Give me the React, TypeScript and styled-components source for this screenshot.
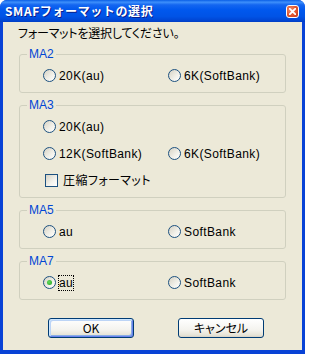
import React from 'react';
import styled, {createGlobalStyle} from 'styled-components';

const GlobalStyle = createGlobalStyle`
  html, body {
    margin: 0;
    padding: 0;
    background: #ffffff;
  }
  body {
    font-family: "Liberation Sans", "Noto Sans CJK JP", sans-serif;
    font-size: 12px;
    color: #000000;
  }
`;

const colors = {
  face: '#ECE9D8',
  frame: '#0842D6',
  groupLine: '#D0D0BF',
  groupText: '#0046D5',
  control: '#1C5180'
};

const Window = styled.div`
  width: 305px;
  height: 354px;
  display: flex;
  flex-direction: column;
  box-sizing: border-box;
  border-radius: 7px 7px 0 0;
  overflow: hidden;
  background: ${colors.frame};
`;

const TitleBar = styled.div`
  height: 22px;
  flex: none;
  display: flex;
  align-items: center;
  justify-content: space-between;
  padding: 0 6px 0 5px;
  background: linear-gradient(
    to bottom,
    #0a5fe6 0%,
    #3d8ffb 10%,
    #1466f0 22%,
    #0058ee 45%,
    #0053e6 75%,
    #0046d4 92%,
    #003ec4 100%
  );
`;

const Title = styled.span`
  color: #ffffff;
  font-family: "Noto Sans CJK JP", sans-serif;
  font-weight: 700;
  font-size: 12px;
  letter-spacing: 0.6px;
  line-height: 14px;
  text-shadow: 1px 1px 0 #0a1e8c;
`;

const CloseButton = styled.span`
  width: 13px;
  height: 13px;
  box-sizing: border-box;
  border: 1px solid #ffffff;
  border-radius: 3px;
  background: radial-gradient(circle at 35% 35%, #f28d6a 0%, #e0542d 55%, #c1381c 100%);
  display: flex;
  align-items: center;
  justify-content: center;
`;

const Body = styled.div`
  flex: 1;
  display: flex;
  flex-direction: column;
  margin: 0 3px 4px 3px;
  padding: 4px 16px 12px 16px;
  background: ${colors.face};
`;

const Prompt = styled.div`
  height: 14px;
  line-height: 14px;
  margin: 0 0 8px -1px;
  font-family: "Noto Sans CJK JP", sans-serif;
  font-feature-settings: "palt";
  letter-spacing: -0.2px;
  white-space: nowrap;
`;

const Groups = styled.div`
  display: flex;
  flex-direction: column;
  gap: 6px;
`;

const Group = styled.fieldset`
  margin: 0;
  padding: 0 0 3px 0;
  min-width: 0;
  border: 1px solid ${colors.groupLine};
  border-radius: 3px;
`;

const Legend = styled.legend`
  margin-left: 7px;
  padding: 0 2px;
  height: 12px;
  line-height: 12px;
  color: ${colors.groupText};
  font-size: 12px;
`;

const Options = styled.div`
  display: grid;
  grid-template-columns: 125px 1fr;
  grid-auto-rows: 27px;
  padding: 2px 0 0 23px;
`;

const Option = styled.label<{$wide?: boolean}>`
  display: flex;
  align-items: center;
  gap: 3px;
  white-space: nowrap;
  grid-column: ${(p) => (p.$wide ? '1 / -1' : 'auto')};
`;

const RadioCircle = styled.span`
  width: 13px;
  height: 13px;
  flex: none;
  box-sizing: border-box;
  border: 1px solid ${colors.control};
  border-radius: 50%;
  background: linear-gradient(135deg, #d6d2c4 0%, #f2f1ea 60%, #ffffff 100%);
  display: flex;
  align-items: center;
  justify-content: center;
`;

const RadioDot = styled.span`
  width: 5px;
  height: 5px;
  border-radius: 50%;
  background: radial-gradient(circle at 40% 40%, #62dc5c 0%, #21a121 100%);
`;

const CheckBox = styled.span`
  width: 13px;
  height: 13px;
  flex: none;
  margin-left: 2px;
  margin-right: 2px;
  box-sizing: border-box;
  border: 1px solid ${colors.control};
  background: linear-gradient(135deg, #d6d2c4 0%, #f4f3ee 60%, #ffffff 100%);
`;

const Caption = styled.span<{$focused?: boolean}>`
  line-height: 12px;
  padding: 1px 0;
  letter-spacing: 0.4px;
  outline: ${(p) => (p.$focused ? '1px dotted #000000' : 'none')};
  outline-offset: 0;
  font-family: "Liberation Sans", "Noto Sans CJK JP", sans-serif;
  font-feature-settings: "palt";
`;

const ButtonRow = styled.div`
  margin-top: auto;
  display: flex;
  gap: 44px;
  padding-left: 29px;
`;

const Button = styled.button<{$default?: boolean}>`
  width: 86px;
  height: 20px;
  padding: 0;
  box-sizing: border-box;
  border: 1px solid #003c74;
  border-radius: 3px;
  font-family: "Noto Sans CJK JP", sans-serif;
  font-feature-settings: "palt";
  font-size: 12px;
  line-height: 16px;
  color: #000000;
  background: linear-gradient(to bottom, #ffffff 0%, #f4f3ee 60%, #e6e3d6 90%, #d6d0c5 100%);
  box-shadow: ${(p) =>
    p.$default
      ? 'inset 1px 1px 0 #cee7ff, inset -1px -1px 0 #6982ee, inset 2px 2px 0 #bcd4f6, inset -2px -2px 0 #89ade4'
      : 'none'};
`;

type Choice = {label: string; checked?: boolean; focused?: boolean; wide?: boolean};

const Radio = ({label, checked, focused, wide}: Choice) => (
  <Option $wide={wide}>
    <RadioCircle role="radio" aria-checked={!!checked}>
      {checked && <RadioDot />}
    </RadioCircle>
    <Caption $focused={focused}>{label}</Caption>
  </Option>
);

const CloseIcon = () => (
  <svg width="7" height="7" viewBox="0 0 7 7">
    <path d="M0.8 0.8 L6.2 6.2 M6.2 0.8 L0.8 6.2" stroke="#ffffff" strokeWidth="1.8" strokeLinecap="square" />
  </svg>
);

export default function App() {
  return (
    <>
      <GlobalStyle />
      <Window>
        <TitleBar>
          <Title>SMAFフォーマットの選択</Title>
          <CloseButton>
            <CloseIcon />
          </CloseButton>
        </TitleBar>
        <Body>
          <Prompt>フォーマットを選択してください。</Prompt>
          <Groups>
            <Group>
              <Legend>MA2</Legend>
              <Options>
                <Radio label="20K(au)" />
                <Radio label="6K(SoftBank)" />
              </Options>
            </Group>
            <Group>
              <Legend>MA3</Legend>
              <Options>
                <Radio label="20K(au)" wide />
                <Radio label="12K(SoftBank)" />
                <Radio label="6K(SoftBank)" />
                <Option $wide>
                  <CheckBox role="checkbox" aria-checked={false} />
                  <Caption>圧縮フォーマット</Caption>
                </Option>
              </Options>
            </Group>
            <Group>
              <Legend>MA5</Legend>
              <Options>
                <Radio label="au" />
                <Radio label="SoftBank" />
              </Options>
            </Group>
            <Group>
              <Legend>MA7</Legend>
              <Options>
                <Radio label="au" checked focused />
                <Radio label="SoftBank" />
              </Options>
            </Group>
          </Groups>
          <ButtonRow>
            <Button $default>OK</Button>
            <Button>キャンセル</Button>
          </ButtonRow>
        </Body>
      </Window>
    </>
  );
}
